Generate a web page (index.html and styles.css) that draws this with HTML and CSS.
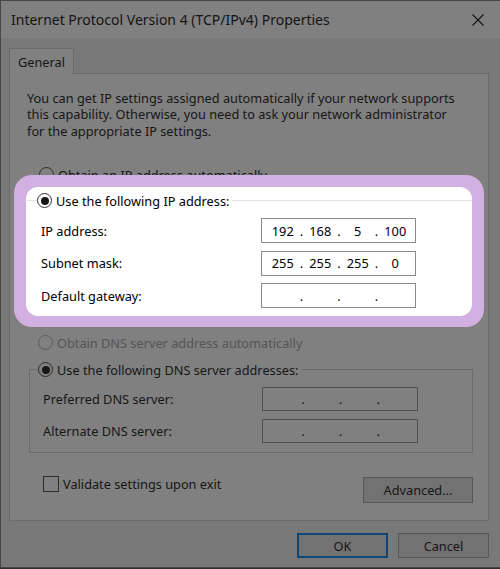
FILE: index.html
```html
<!DOCTYPE html>
<html>
<head>
<meta charset="utf-8">
<title>Internet Protocol Version 4 (TCP/IPv4) Properties</title>
<link rel="stylesheet" href="styles.css">
</head>
<body>
<div class="dialog">
  <div class="titlebar">
    <span class="title">Internet Protocol Version 4 (TCP/IPv4) Properties</span>
    <svg class="close" width="12" height="12" viewBox="0 0 12 12" aria-hidden="true"><path d="M0.5 0.5 L11.5 11.5 M11.5 0.5 L0.5 11.5" stroke="#141414" stroke-width="1.1" fill="none"/></svg>
  </div>
  <div class="body">
    <div class="tabs"><div class="tab">General</div></div>
    <div class="panel">
      <p class="intro">You can get IP settings assigned automatically if your network supports<br>this capability. Otherwise, you need to ask your network administrator<br>for the appropriate IP settings.</p>
      <div class="radio-row first-radio"><span class="radio"></span><span>Obtain an IP address automatically</span></div>
      <div class="highlight">
        <div class="hl-inner">
          <fieldset class="group group-ip">
            <legend class="legend"><span class="radio checked light"></span><span>Use the following IP address:</span></legend>
            <div class="rows rows-ip">
              <div class="field-row"><span class="label">IP address:</span>
                <div class="ipbox light"><span class="seg">192</span><span class="dot">.</span><span class="seg">168</span><span class="dot">.</span><span class="seg">5</span><span class="dot">.</span><span class="seg">100</span></div></div>
              <div class="field-row"><span class="label">Subnet mask:</span>
                <div class="ipbox light"><span class="seg">255</span><span class="dot">.</span><span class="seg">255</span><span class="dot">.</span><span class="seg">255</span><span class="dot">.</span><span class="seg">0</span></div></div>
              <div class="field-row"><span class="label">Default gateway:</span>
                <div class="ipbox light"><span class="seg"></span><span class="dot">.</span><span class="seg"></span><span class="dot">.</span><span class="seg"></span><span class="dot">.</span><span class="seg"></span></div></div>
            </div>
          </fieldset>
        </div>
      </div>
      <div class="radio-row dns-auto disabled"><span class="radio"></span><span>Obtain DNS server address automatically</span></div>
      <fieldset class="group group-dns">
        <legend class="legend"><span class="radio checked"></span><span>Use the following DNS server addresses:</span></legend>
        <div class="rows rows-dns">
          <div class="field-row"><span class="label">Preferred DNS server:</span>
            <div class="ipbox"><span class="seg"></span><span class="dot">.</span><span class="seg"></span><span class="dot">.</span><span class="seg"></span><span class="dot">.</span><span class="seg"></span></div></div>
          <div class="field-row"><span class="label">Alternate DNS server:</span>
            <div class="ipbox"><span class="seg"></span><span class="dot">.</span><span class="seg"></span><span class="dot">.</span><span class="seg"></span><span class="dot">.</span><span class="seg"></span></div></div>
        </div>
      </fieldset>
      <div class="bottom-row">
        <label class="check"><span class="checkbox"></span><span>Validate settings upon exit</span></label>
        <button class="btn advanced" type="button">Advanced...</button>
      </div>
    </div>
    <div class="actions">
      <button class="btn ok" type="button">OK</button>
      <button class="btn" type="button">Cancel</button>
    </div>
  </div>
</div>
</body>
</html>
```

FILE: styles.css
```css
html, body {
  margin: 0;
  padding: 0;
  background: #2e2e2e;
}
body {
  width: 500px;
  height: 569px;
  overflow: hidden;
  font-family: "Noto Sans", "Open Sans", sans-serif;
  font-size: 12.75px;
  color: #161616;
}
.dialog {
  width: 500px;
  height: 568px;
  box-sizing: border-box;
  border-left: 1px solid #474747;
  border-top: 1px solid #474747;
  border-bottom: 1px solid #474747;
  background: #787878;
  display: flex;
  flex-direction: column;
}
.titlebar {
  height: 37px;
  flex: none;
  background: #808080;
  display: flex;
  align-items: center;
  justify-content: space-between;
  padding: 0 16px 0 10px;
}
.title {
  font-size: 14px;
  color: #141414;
}
.close { display: block; }
.body {
  padding: 10px 11px 0 8px;
  display: flex;
  flex-direction: column;
}
.tabs {
  display: flex;
  height: 25px;
}
.tab {
  width: 65px;
  height: 26px;
  box-sizing: border-box;
  border: 1px solid #6b6b6b;
  border-bottom: none;
  background: #808080;
  display: flex;
  align-items: center;
  justify-content: center;
  position: relative;
  z-index: 1;
}
.panel {
  height: 448px;
  box-sizing: border-box;
  border: 1px solid #6b6b6b;
  background: #808080;
  display: flex;
  flex-direction: column;
}
.intro {
  margin: 15.5px 0 0 17px;
  line-height: 16.5px;
}
.radio-row {
  display: flex;
  align-items: center;
  gap: 4px;
  height: 17px;
}
.first-radio {
  margin-top: 27px;
  padding-left: 29px;
}
.radio {
  width: 15px;
  height: 15px;
  box-sizing: border-box;
  border: 1px solid #2c2c2c;
  border-radius: 50%;
  background: #808080;
  display: flex;
  align-items: center;
  justify-content: center;
  flex: none;
}
.radio.light {
  border-color: #333;
  background: #fff;
}
.radio.checked::after {
  content: "";
  width: 8px;
  height: 8px;
  border-radius: 50%;
  background: #181818;
}
.highlight {
  position: relative;
  margin: -8px 4px 0 4px;
  padding: 12px 12px 11px 12px;
  background: #d3b0e2;
  border-radius: 18px;
}
.hl-inner {
  background: #fff;
  border-radius: 12px;
  padding: 5px 0 8px 0;
  color: #000;
}
.group {
  margin: 0;
  padding: 0;
  min-width: 0;
}
.group-ip {
  margin-left: 1px;
  border: none;
  border-top: 1px solid #e3e3e3;
}
.legend {
  display: flex;
  align-items: center;
  gap: 4px;
  height: 17px;
  padding: 0 3px 0 0;
  margin-left: 10px;
}
.rows {
  display: flex;
  flex-direction: column;
}
.rows-ip {
  margin-top: 9px;
  row-gap: 7.5px;
}
.field-row {
  display: flex;
  align-items: center;
}
.label {
  box-sizing: border-box;
  flex: none;
}
.rows-ip .label {
  width: 234px;
  padding-left: 14px;
}
.ipbox {
  display: flex;
  align-items: center;
  width: 155px;
  height: 25px;
  box-sizing: border-box;
  border: 1px solid #4f4f4f;
  padding-left: 2px;
}
.ipbox.light {
  border-color: #8a8a8a;
  background: #fff;
}
.seg {
  width: 37.5px;
  text-align: center;
  flex: none;
}
.dot {
  width: 0;
  display: flex;
  justify-content: center;
  flex: none;
}
.dns-auto {
  margin-top: 7px;
  padding-left: 28px;
}
.disabled { color: #555; }
.disabled .radio { border-color: #5c5c5c; }
.group-dns {
  margin: 10px 15px 0 19px;
  border: 1px solid #6b6b6b;
  padding-bottom: 9px;
}
.group-dns .legend { margin-left: 8px; }
.rows-dns {
  margin-top: 9px;
  row-gap: 8px;
}
.rows-dns .label {
  width: 231.7px;
  padding-left: 13px;
}
.rows-dns .ipbox {
  width: 156px;
  height: 24px;
  padding-left: 3px;
}
.bottom-row {
  margin: 23px 15px 0 33px;
  display: flex;
  justify-content: space-between;
  align-items: flex-start;
}
.check {
  display: flex;
  align-items: center;
  gap: 4px;
  height: 16px;
}
.checkbox {
  width: 16px;
  height: 16px;
  box-sizing: border-box;
  border: 1px solid #2c2c2c;
  background: #808080;
  flex: none;
}
.btn {
  font-family: inherit;
  font-size: 12.75px;
  color: #161616;
  background: #727272;
  border: 1px solid #575757;
  padding: 0;
  margin: 0;
  height: 25px;
  width: 91px;
  box-sizing: border-box;
}
.advanced {
  width: 110px;
  height: 26px;
  margin-top: 1px;
}
.actions {
  display: flex;
  justify-content: flex-end;
  gap: 10px;
  margin-top: 12px;
}
.ok {
  border: 2px solid #0f4678;
}
```
